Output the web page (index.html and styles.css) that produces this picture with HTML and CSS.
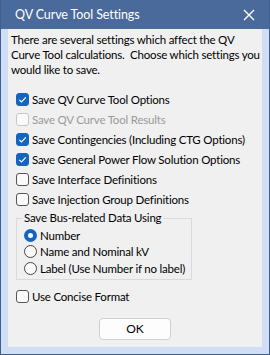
FILE: index.html
```html
<!DOCTYPE html>
<html lang="en">
<head>
    <meta charset="UTF-8">
    <title>QV Curve Tool Settings</title>
    <link rel="stylesheet" href="styles.css">
</head>
<body>
    <div class="window">
        <div class="titlebar">
            <span class="title">QV Curve Tool Settings</span>
            <svg class="close" width="12" height="12" viewBox="0 0 12 12">
                <path d="M1 1L11 11M11 1L1 11" stroke="#fff" stroke-width="1.4"/>
            </svg>
        </div>
        <div class="frame">
            <div class="dialog">
                <p class="intro">There are several settings which affect the QV<br>Curve Tool calculations.&nbsp; Choose which settings you<br>would like to save.</p>

                <div class="checks">
                    <label class="check"><span class="box checked"><svg width="13" height="13" viewBox="0 0 13 13"><path d="M3.3 6.8L5.5 9L9.8 4.4" stroke="#fff" stroke-width="1.2" fill="none"/></svg></span>Save QV Curve Tool Options</label>
                    <label class="check disabled"><span class="box"></span>Save QV Curve Tool Results</label>
                    <label class="check"><span class="box checked"><svg width="13" height="13" viewBox="0 0 13 13"><path d="M3.3 6.8L5.5 9L9.8 4.4" stroke="#fff" stroke-width="1.2" fill="none"/></svg></span>Save Contingencies (Including CTG Options)</label>
                    <label class="check"><span class="box checked"><svg width="13" height="13" viewBox="0 0 13 13"><path d="M3.3 6.8L5.5 9L9.8 4.4" stroke="#fff" stroke-width="1.2" fill="none"/></svg></span>Save General Power Flow Solution Options</label>
                    <label class="check"><span class="box"></span>Save Interface Definitions</label>
                    <label class="check"><span class="box"></span>Save Injection Group Definitions</label>
                </div>

                <fieldset class="group">
                    <legend>Save Bus-related Data Using</legend>
                    <label class="radio"><span class="dot on"></span>Number</label>
                    <label class="radio"><span class="dot"></span>Name and Nominal kV</label>
                    <label class="radio"><span class="dot"></span>Label (Use Number if no label)</label>
                </fieldset>

                <label class="check concise"><span class="box"></span>Use Concise Format</label>

                <div class="buttons">
                    <button class="ok">OK</button>
                </div>
            </div>
        </div>
    </div>
</body>
</html>
```

FILE: styles.css
```css
body {
    margin: 0;
    font-family: Lato, "Noto Sans", sans-serif;
    font-size: 11.5px;
    letter-spacing: -0.2px;
    color: #000;
}

.window {
    width: 270px;
    height: 355px;
    box-sizing: border-box;
    background: #4a6a9b;
    border: 1px solid #3f5f90;
    border-top: none;
    display: flex;
    flex-direction: column;
    overflow: hidden;
}

.titlebar {
    height: 29px;
    display: flex;
    align-items: center;
    justify-content: space-between;
    padding: 0 14px 0 14px;
    color: #fff;
}

.title {
    font-size: 12.5px;
    letter-spacing: -0.1px;
}

.close {
    margin-top: 1px;
}

.frame {
    flex: 1;
    background: #cfdef5;
    padding: 0 7px 7px 7px;
    display: flex;
}

.dialog {
    flex: 1;
    min-width: 0;
    background: #f0f0f0;
    padding: 3px 0 0 3px;
    white-space: nowrap;
}

.intro {
    margin: 0;
    line-height: 15px;
}

.checks {
    margin-top: 12px;
    margin-left: 5px;
}

.check {
    display: flex;
    align-items: center;
    height: 20px;
}

.box {
    width: 11px;
    height: 11px;
    border: 1px solid #555;
    border-radius: 3px;
    background: #fbfbfb;
    margin-right: 3px;
    position: relative;
}

.box svg {
    position: absolute;
    left: -1px;
    top: -1px;
}

.box.checked {
    background: #1565c0;
    border-color: #1565c0;
}

.disabled {
    color: #9a9a9a;
}

.disabled .box {
    border-color: #c8c8c8;
}

.group {
    margin: 2px 0 0 5px;
    width: 176px;
    box-sizing: border-box;
    border: 1px solid #dadada;
    padding: 2px 0 2px 7px;
}

.group legend {
    padding: 0 2px;
    margin-left: -2px;
    line-height: 14px;
}

.radio {
    display: flex;
    align-items: center;
    height: 16.5px;
}

.dot {
    width: 11px;
    height: 11px;
    border: 1px solid #444;
    border-radius: 50%;
    background: #fbfbfb;
    margin-right: 3px;
    box-sizing: content-box;
}

.dot.on {
    width: 5px;
    height: 5px;
    border: 4px solid #1565c0;
    background: #fff;
}

.concise {
    margin: 7px 0 0 5px;
}

.buttons {
    display: flex;
    justify-content: center;
    margin-top: 11px;
    padding-right: 3px;
}

.ok {
    width: 72px;
    height: 22px;
    border: 1px solid #d0d0d0;
    border-radius: 4px;
    background: #fdfdfd;
    font-family: inherit;
    font-size: 12px;
    color: #000;
}
```
